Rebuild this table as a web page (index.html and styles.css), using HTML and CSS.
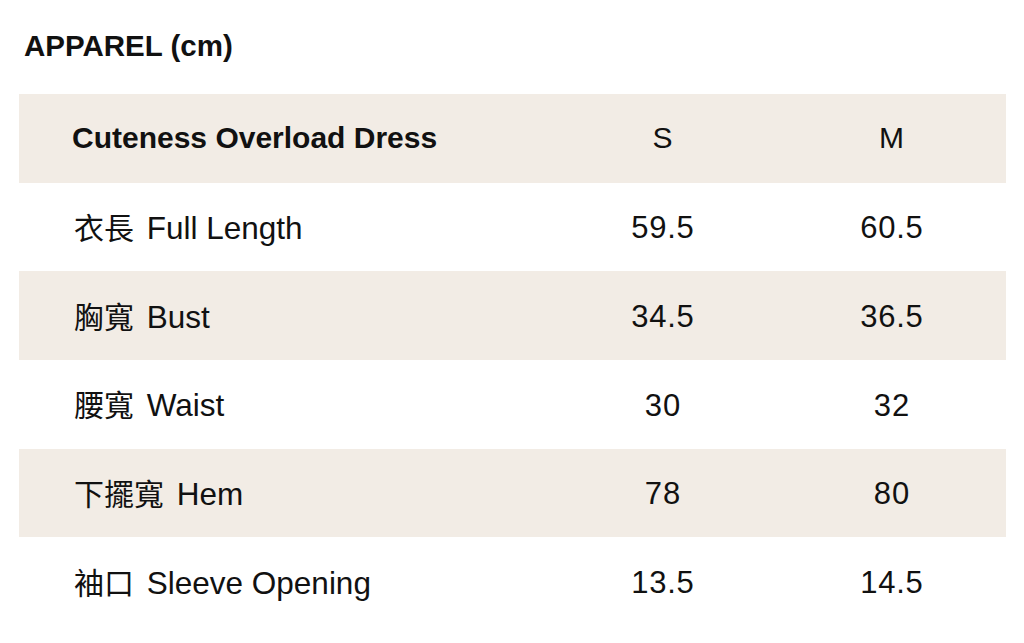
FILE: index.html
```html
<!DOCTYPE html>
<html lang="zh-Hant">
<head>
<meta charset="utf-8">
<title>APPAREL (cm)</title>
<link rel="stylesheet" href="styles.css">
</head>
<body>
<main class="page">
  <h1 class="title">APPAREL (cm)</h1>
  <div class="table">
    <div class="row shaded head">
      <div class="cell name">Cuteness Overload Dress</div>
      <div class="cell size">S</div>
      <div class="cell size">M</div>
    </div>
    <div class="row">
      <div class="cell name"><span class="cjk">衣長</span> Full Length</div>
      <div class="cell size num">59.5</div>
      <div class="cell size num">60.5</div>
    </div>
    <div class="row shaded">
      <div class="cell name"><span class="cjk">胸寬</span> Bust</div>
      <div class="cell size num">34.5</div>
      <div class="cell size num">36.5</div>
    </div>
    <div class="row">
      <div class="cell name"><span class="cjk">腰寬</span> Waist</div>
      <div class="cell size num">30</div>
      <div class="cell size num">32</div>
    </div>
    <div class="row shaded">
      <div class="cell name"><span class="cjk">下擺寬</span> Hem</div>
      <div class="cell size num">78</div>
      <div class="cell size num">80</div>
    </div>
    <div class="row">
      <div class="cell name"><span class="cjk">袖口</span> Sleeve Opening</div>
      <div class="cell size num">13.5</div>
      <div class="cell size num">14.5</div>
    </div>
  </div>
</main>
</body>
</html>
```

FILE: styles.css
```css
* { box-sizing: border-box; }
html, body {
  margin: 0;
  padding: 0;
  background: #ffffff;
}
body {
  font-family: "Liberation Sans", "Noto Sans CJK TC", sans-serif;
  color: #111111;
}
.page {
  padding: 29px 18px 0 19px;
}
.title {
  margin: 0 0 31px 5px;
  font-size: 29.5px;
  line-height: 34px;
  font-weight: 700;
}
.table {
  display: flex;
  flex-direction: column;
  width: 987px;
}
.row {
  display: grid;
  grid-template-columns: 529px 229px 229px;
  height: 88.67px;
  align-items: center;
}
.row.shaded {
  background: #f2ece5;
}
.cell {
  font-size: 30px;
  line-height: 36px;
  white-space: nowrap;
}
.name {
  padding-left: 53px;
  font-size: 31.5px;
}
.head .name {
  font-size: 30px;
  font-weight: 700;
}
.cjk {
  font-family: "Noto Sans CJK TC", sans-serif;
  font-size: 30px;
  margin-left: 2px;
  margin-right: 4px;
}
.size {
  text-align: center;
}
.num {
  font-size: 31px;
  letter-spacing: 0.8px;
  text-indent: 0.8px;
  padding-top: 3px;
}
```
